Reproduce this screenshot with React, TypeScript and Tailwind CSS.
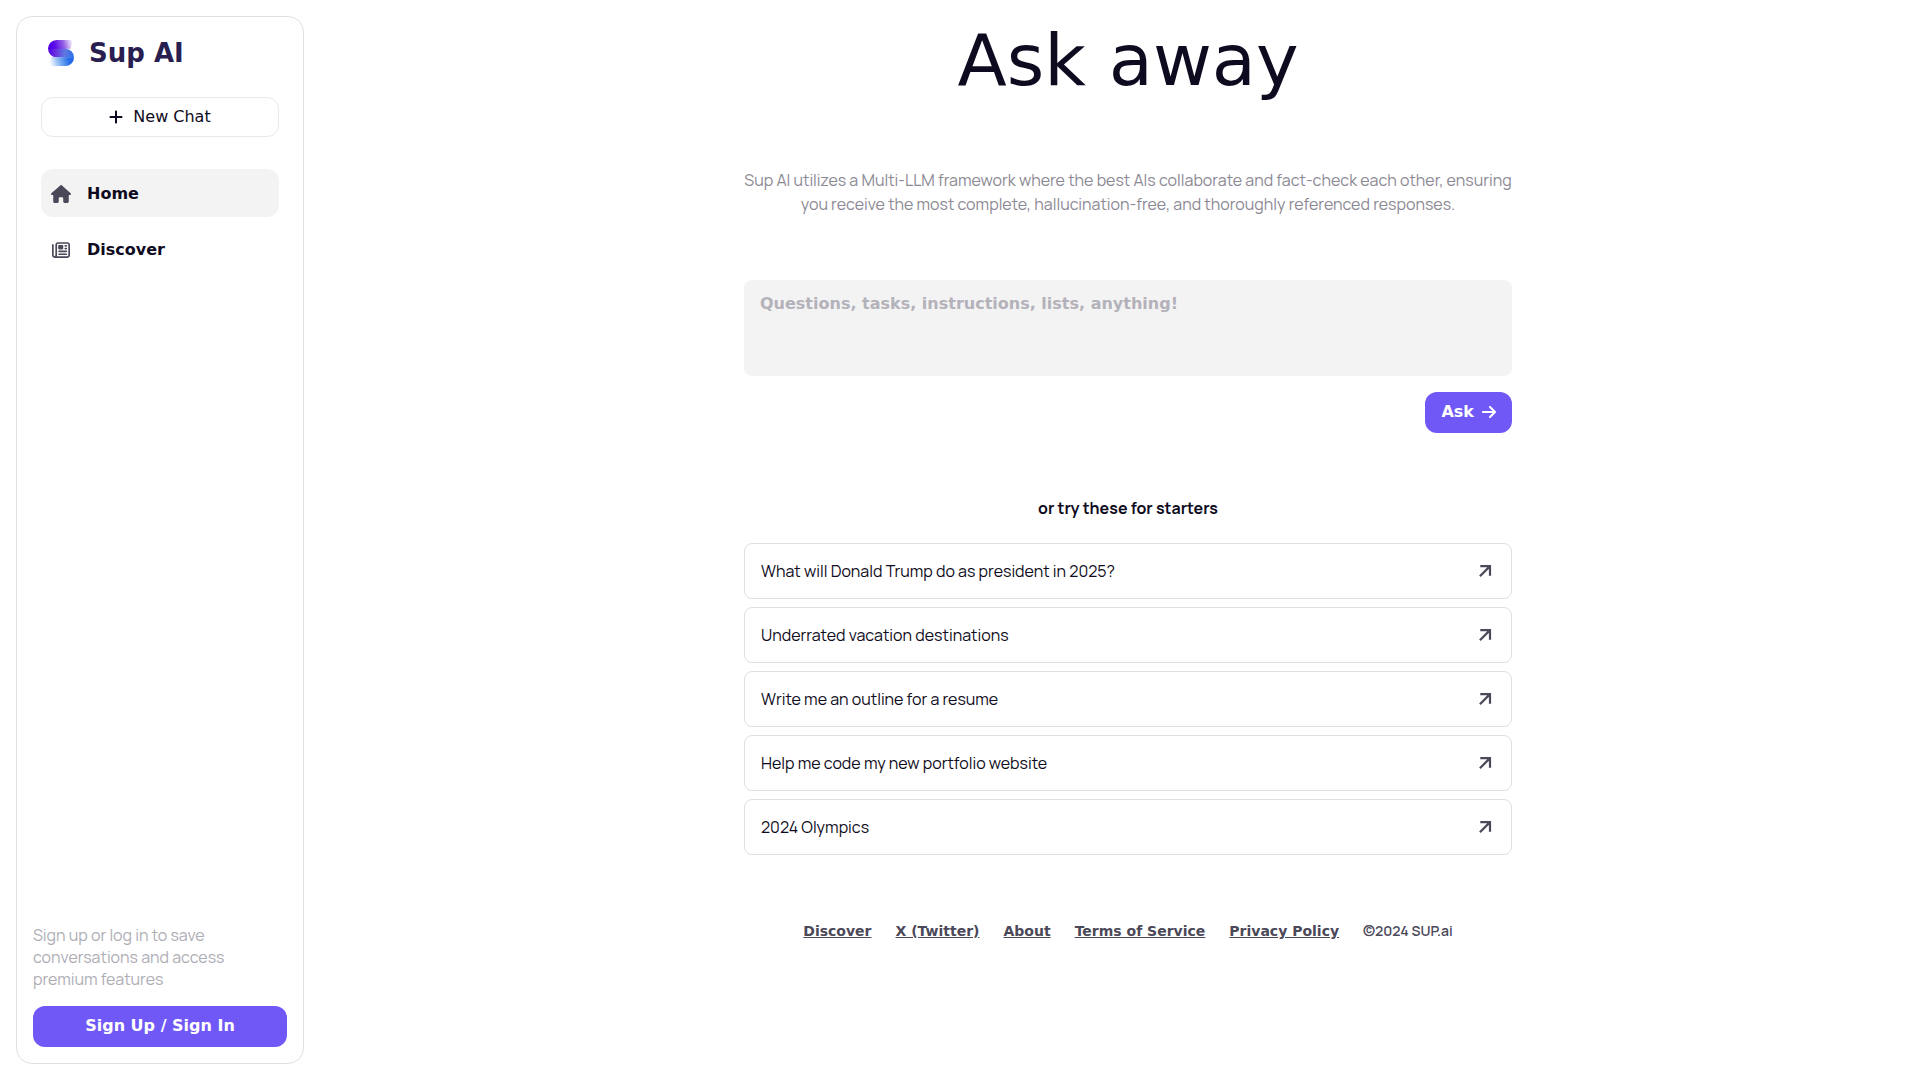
import { FaArrowRight, FaHouse, FaPlus, FaRegNewspaper } from "react-icons/fa6";

const starters = [
    "What will Donald Trump do as president in 2025?",
    "Underrated vacation destinations",
    "Write me an outline for a resume",
    "Help me code my new portfolio website",
    "2024 Olympics",
]

const footerLinks = ["Discover", "X (Twitter)", "About", "Terms of Service", "Privacy Policy"]

const Logo = () => (
    <svg viewBox="0 0 26 26" className="h-[26px] w-[26px]" aria-hidden="true">
        <defs>
            <clipPath id="logoShape">
                <path d="M8.6 0H25L22.5 8.8H17.4A8.6 8.6 0 0 1 17.4 26H1L3.5 17.2H8.6A8.6 8.6 0 0 1 8.6 0Z" />
            </clipPath>
            <linearGradient id="logoTop" x1="2" y1="8" x2="25" y2="2" gradientUnits="userSpaceOnUse">
                <stop offset="0" stopColor="#4f00e6" />
                <stop offset="0.2" stopColor="#5a08e8" />
                <stop offset="0.6" stopColor="#9562e6" />
                <stop offset="1" stopColor="#ffffff" />
            </linearGradient>
            <linearGradient id="logoMiddle" x1="0" y1="0" x2="26" y2="0" gradientUnits="userSpaceOnUse">
                <stop offset="0" stopColor="#4f00e6" />
                <stop offset="0.3" stopColor="#6a32dc" />
                <stop offset="0.65" stopColor="#6078e2" />
                <stop offset="1" stopColor="#2a70ea" />
            </linearGradient>
            <linearGradient id="logoBottom" x1="2" y1="25" x2="25" y2="19" gradientUnits="userSpaceOnUse">
                <stop offset="0" stopColor="#ffffff" />
                <stop offset="0.4" stopColor="#86b8f2" />
                <stop offset="0.8" stopColor="#2a70ea" />
                <stop offset="1" stopColor="#1f66ea" />
            </linearGradient>
        </defs>
        <g clipPath="url(#logoShape)">
            <rect width="26" height="9" fill="url(#logoTop)" />
            <rect y="8.8" width="26" height="8.6" fill="url(#logoMiddle)" />
            <rect y="17.2" width="26" height="8.8" fill="url(#logoBottom)" />
        </g>
    </svg>
)

const ArrowUpRight = () => (
    <svg viewBox="0 0 20 20" className="h-5 w-5 text-[#4b4859]" fill="none" stroke="currentColor" strokeWidth="2.2" aria-hidden="true">
        <path d="M5.3 5.1H15V14.8M15 5.1L4.9 15.2" />
    </svg>
)

const Sidebar = () => {
    return (
        <div className="sticky top-0 h-screen w-80 shrink-0 p-4">
            <aside className="flex h-full w-72 flex-col rounded-2xl border border-[#e0e0e2] px-4 py-4">
                <div className="flex flex-col px-2">
                    <a href="#" className="flex h-10 items-center gap-[15px] px-[7px] text-[#291e50]">
                        <Logo />
                        <span className="text-[26px] leading-10 font-bold">Sup AI</span>
                    </a>
                    <button className="mt-6 flex h-10 items-center justify-center gap-2.5 rounded-xl border border-[#e9e9eb]">
                        <FaPlus className="h-4 w-3.5" />
                        New Chat
                    </button>
                    <nav className="mt-8 flex flex-col gap-2 font-bold">
                        <a href="#" className="flex h-12 items-center gap-4 rounded-xl bg-[#f3f3f3] px-2.5 pt-0.5">
                            <FaHouse className="h-[18px] w-5 text-[#4b4859]" />
                            Home
                        </a>
                        <a href="#" className="flex h-12 items-center gap-4 rounded-xl px-2.5 pt-0.5">
                            <FaRegNewspaper className="h-[18px] w-5 text-[#4b4859]" />
                            Discover
                        </a>
                    </nav>
                </div>
                <p className="mt-auto font-['Manrope','Inter',sans-serif] leading-[22px] text-[#aeadb5]">
                    Sign up or log in to save conversations and access premium features
                </p>
                <button className="mt-4 h-[41px] rounded-xl bg-[#7058f6] pb-0.5 font-bold text-white">Sign Up / Sign In</button>
            </aside>
        </div>
    )
}

const App = () => {
    return (
        <div className="flex min-h-screen bg-white font-['DejaVu_Sans',sans-serif] text-base text-[#0e0b20]">
            <Sidebar />
            <main className="flex flex-1 flex-col items-center pt-4 pl-4">
                <div className="flex w-full max-w-3xl flex-col">
                    <h1 className="text-center text-7xl leading-[88px]">Ask away</h1>
                    <p className="mt-16 text-center font-['Manrope','Inter',sans-serif] text-[#8b8994]">
                        Sup AI utilizes a Multi-LLM framework where the best AIs collaborate and fact-check each other, ensuring
                        you receive the most complete, hallucination-free, and thoroughly referenced responses.
                    </p>
                    <form className="mt-16 flex flex-col items-end gap-4" onSubmit={(e) => e.preventDefault()}>
                        <textarea
                            aria-label="Question"
                            placeholder="Questions, tasks, instructions, lists, anything!"
                            className="block h-24 w-full resize-none rounded-lg bg-[#f3f3f3] px-4 py-3 font-bold outline-none placeholder:text-[#b3b2ba]"
                        />
                        <button className="flex h-[41px] items-center gap-2 rounded-xl bg-[#7058f6] px-4 pb-0.5 font-bold text-white">
                            Ask
                            <FaArrowRight className="h-4 w-3.5" />
                        </button>
                    </form>
                    <h2 className="mt-16 text-center font-['Manrope','Inter',sans-serif] leading-[22px] font-bold">or try these for starters</h2>
                    <div className="mt-6 flex flex-col gap-2 font-['Manrope','Inter',sans-serif]">
                        {starters.map((starter) => (
                            <button key={starter} className="flex h-14 items-center justify-between rounded-lg border border-[#e0e0e2] px-4 text-left">
                                {starter}
                                <ArrowUpRight />
                            </button>
                        ))}
                    </div>
                    <footer className="mt-16 flex items-center justify-center gap-6 text-sm leading-6 text-[#4b4859]">
                        {footerLinks.map((link) => (
                            <a key={link} href="#" className="font-bold underline">{link}</a>
                        ))}
                        <span className="font-['Manrope','Inter',sans-serif] font-semibold">©2024 SUP.ai</span>
                    </footer>
                </div>
            </main>
        </div>
    )
}

export default App;
